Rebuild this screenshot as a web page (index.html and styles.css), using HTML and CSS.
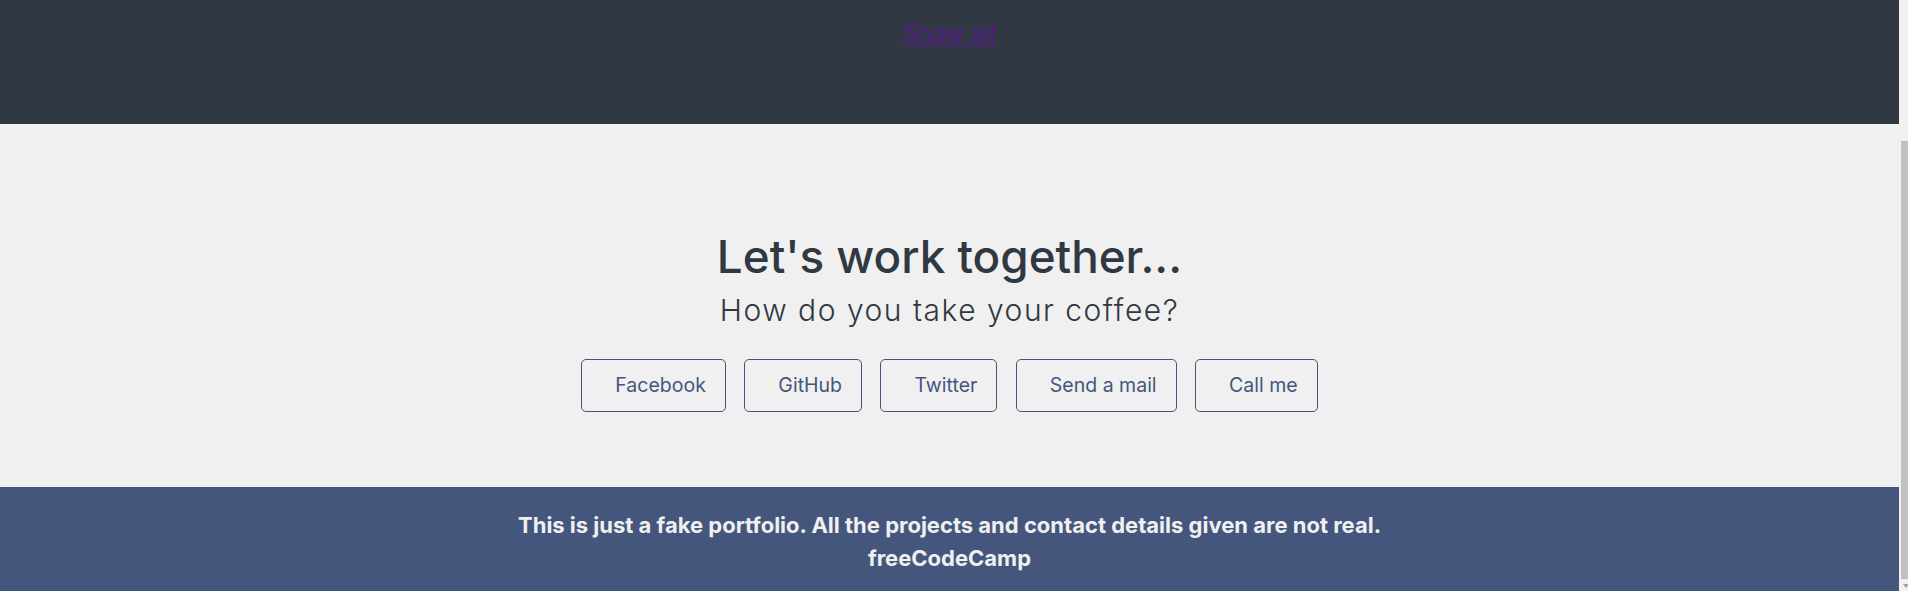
FILE: index.html
```html
<!DOCTYPE html>
<html lang="en">
<head>
<meta charset="utf-8">
<title>Portfolio</title>
<link rel="stylesheet" href="styles.css">
</head>
<body>
  <div class="page">
    <section class="projects">
      <a class="show-all" href="#projects">Show all</a>
    </section>

    <section class="contact">
      <h1 class="contact-title">Let's work together...</h1>
      <p class="contact-sub">How do you take your coffee?</p>
      <div class="contact-links">
        <a class="contact-btn" href="#">Facebook</a>
        <a class="contact-btn" href="#">GitHub</a>
        <a class="contact-btn" href="#">Twitter</a>
        <a class="contact-btn" href="#">Send a mail</a>
        <a class="contact-btn" href="#">Call me</a>
      </div>
    </section>

    <footer class="footer">
      <p class="footer-line">This is just a fake portfolio. All the projects and contact details given are not real.</p>
      <p class="footer-line">freeCodeCamp</p>
    </footer>
  </div>
  <div class="scrollbar" aria-hidden="true">
    <div class="scrollbar-thumb"></div>
    <div class="scrollbar-arrow"></div>
  </div>
</body>
</html>
```
FILE: styles.css
```css
html {
  background: #f0f0f0;
}

body {
  margin: 0;
  display: flex;
  height: 591px;
  overflow: hidden;
  font-family: "Inter", "Noto Sans", sans-serif;
  color: #303841;
  background: #f0f0f0;
}

.page {
  flex: 1;
  min-width: 0;
  display: flex;
  flex-direction: column;
}

.scrollbar {
  width: 9px;
  flex-shrink: 0;
  background: #f1f1f1;
  display: flex;
  flex-direction: column;
}

.scrollbar-thumb {
  margin: 141px 0 0 2px;
  height: 438px;
  background: #c1c1c1;
}

.scrollbar-arrow {
  margin: auto 0 3px 4px;
  width: 0;
  height: 0;
  border-left: 3.5px solid transparent;
  border-right: 3.5px solid transparent;
  border-top: 4px solid #a3a3a3;
}

.projects {
  height: 124px;
  box-sizing: border-box;
  padding-top: 19px;
  background: #303841;
  display: flex;
  justify-content: center;
  align-items: flex-start;
}

.show-all {
  font-size: 23.5px;
  line-height: 28px;
  color: #551a8b;
  text-decoration: underline;
}

.contact {
  padding: 106px 0 75px;
  display: flex;
  flex-direction: column;
  align-items: center;
  text-align: center;
}

.contact-title {
  margin: 0;
  font-size: 45.8px;
  font-weight: 500;
  line-height: 54px;
  color: #303841;
}

.contact-sub {
  margin: 8px 0 31px;
  font-size: 30px;
  font-weight: 300;
  letter-spacing: 1.5px;
  line-height: 36px;
  color: #303841;
}

.contact-links {
  display: flex;
  justify-content: center;
  gap: 18.5px;
}

.contact-btn {
  display: block;
  padding: 14px 19px 14px 33px;
  border: 1px solid #45567d;
  border-radius: 5px;
  font-size: 19.5px;
  line-height: 23px;
  color: #45567d;
  text-decoration: none;
}

.footer {
  flex: 1;
  background: #45567d;
  padding: 22px 0 16px;
  text-align: center;
}

.footer-line {
  margin: 0;
  font-size: 22px;
  font-weight: 700;
  line-height: 33px;
  color: #f0f0f0;
}
```
